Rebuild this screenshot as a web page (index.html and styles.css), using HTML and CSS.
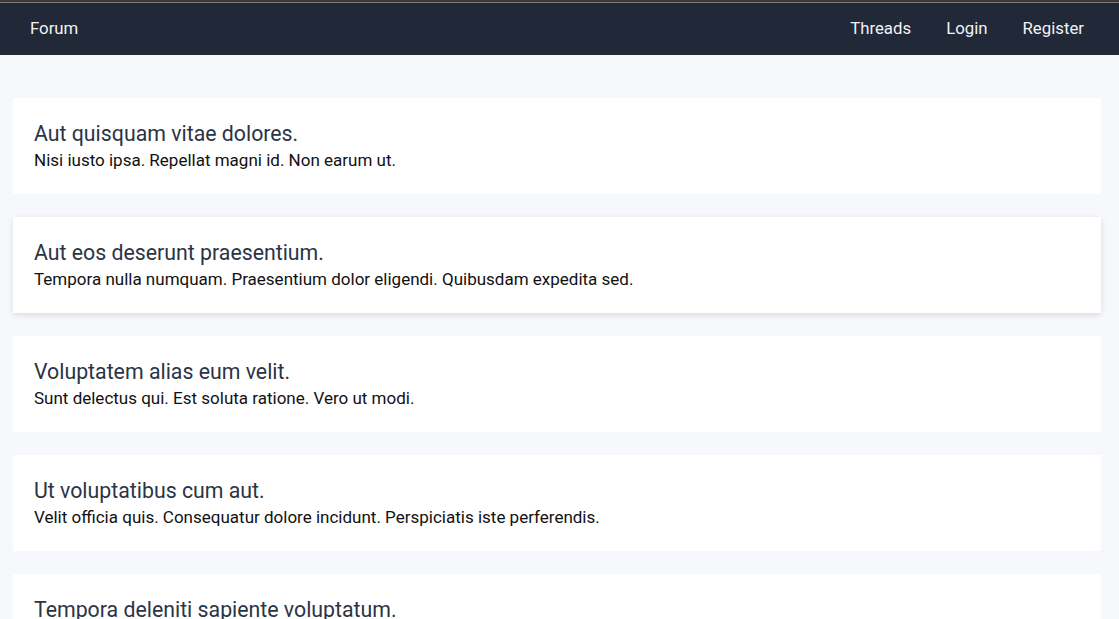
FILE: index.html
```html
<!DOCTYPE html>
<html lang="en">
<head>
<meta charset="utf-8">
<title>Forum</title>
<link rel="stylesheet" href="styles.css">
</head>
<body>
<div class="topline"></div>
<nav class="navbar">
  <a class="brand" href="#">Forum</a>
  <div class="links">
    <a href="#">Threads</a>
    <a href="#">Login</a>
    <a href="#">Register</a>
  </div>
</nav>
<main class="threads">
  <article class="card">
    <h2 class="title">Aut quisquam vitae dolores.</h2>
    <p class="body">Nisi iusto ipsa. Repellat magni id. Non earum ut.</p>
  </article>
  <article class="card raised">
    <h2 class="title">Aut eos deserunt praesentium.</h2>
    <p class="body">Tempora nulla numquam. Praesentium dolor eligendi. Quibusdam expedita sed.</p>
  </article>
  <article class="card">
    <h2 class="title">Voluptatem alias eum velit.</h2>
    <p class="body">Sunt delectus qui. Est soluta ratione. Vero ut modi.</p>
  </article>
  <article class="card">
    <h2 class="title">Ut voluptatibus cum aut.</h2>
    <p class="body">Velit officia quis. Consequatur dolore incidunt. Perspiciatis iste perferendis.</p>
  </article>
  <article class="card">
    <h2 class="title">Tempora deleniti sapiente voluptatum.</h2>
    <p class="body">Aut sunt quia. Eius dolorem rerum. Et fugiat illo.</p>
  </article>
</main>
</body>
</html>
```

FILE: styles.css
```css
html, body {
  margin: 0;
  padding: 0;
}
body {
  background: #f7f8fc;
  font-family: Roboto, "Liberation Sans", sans-serif;
  overflow: hidden;
  height: 619px;
}
.topline {
  height: 2px;
  background: #383838;
  border-bottom: 1px solid #7a7a7a;
}
.navbar {
  height: 52px;
  box-sizing: border-box;
  padding: 0 35px 2px 30px;
  background: #212837;
  display: flex;
  align-items: center;
  justify-content: space-between;
}
.navbar a {
  color: #f1f2f5;
  text-decoration: none;
  font-size: 16.8px;
}
.links {
  display: flex;
  gap: 35px;
}
.threads {
  display: flex;
  flex-direction: column;
  gap: 23px;
  padding: 43px 18px 0 13px;
}
.card {
  background: #ffffff;
  height: 96px;
  flex-shrink: 0;
  box-sizing: border-box;
  padding: 24px 21px 0 21px;
  overflow: hidden;
}
.card.raised {
  box-shadow: 0 2px 6px rgba(0, 0, 0, 0.12);
}
.title {
  margin: 0;
  font-size: 21.3px;
  font-weight: 400;
  color: #2b3445;
  line-height: 24px;
}
.body {
  margin: 4px 0 0 0;
  font-size: 17px;
  color: #111111;
  line-height: 20px;
}
```
